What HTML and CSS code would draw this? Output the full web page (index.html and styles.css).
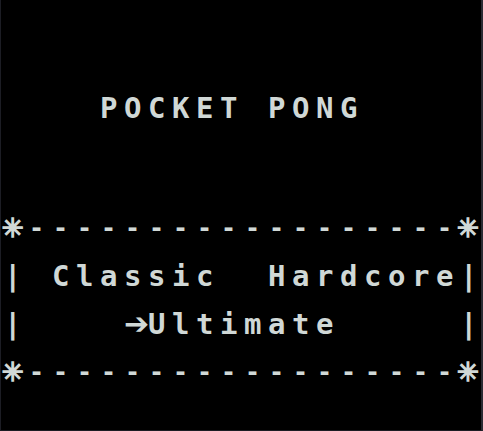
FILE: index.html
```html
<!DOCTYPE html>
<html>
<head>
<meta charset="utf-8">
<link rel="stylesheet" href="styles.css">
</head>
<body>
<div class="screen">
  <div class="line title">    POCKET PONG</div>
  <div class="box">
    <div class="line"><span class="star">✳</span><span class="dashes">-----------------<span class="last">-</span></span><span class="star end">✳</span></div>
    <div class="line">| Classic  Hardcore|</div>
    <div class="line">|    <span class="arrow">➔</span>Ultimate     |</div>
    <div class="line"><span class="star">✳</span><span class="dashes">-----------------<span class="last">-</span></span><span class="star end">✳</span></div>
  </div>
</div>
</body>
</html>
```
FILE: styles.css
```css
html, body {
  margin: 0;
  padding: 0;
  background: #000;
}
.screen {
  box-sizing: border-box;
  width: 483px;
  height: 431px;
  background: #000;
  border-left: 1px solid #1c1d24;
  border-right: 2px solid #2a2b33;
  border-bottom: 1px solid #1c1d24;
  padding: 84px 0 0 3px;
  color: #d0d8d6;
  font-family: "DejaVu Sans Mono", monospace;
  font-weight: bold;
  font-size: 29px;
  overflow: hidden;
}
.line {
  height: 48px;
  line-height: 48px;
  white-space: pre;
  letter-spacing: 6.54px;
}
.box {
  margin-top: 72px;
}
.dashes {
  display: inline-block;
  vertical-align: top;
  font-size: 25px;
  letter-spacing: 8.95px;
  padding-left: 4px;
}
.dashes .last {
  letter-spacing: 0;
  margin-right: 4px;
}
.star {
  display: inline-block;
  width: 24px;
  margin-left: -3px;
  letter-spacing: 0;
  text-align: center;
  font-family: "DejaVu Sans", sans-serif;
  font-weight: bold;
  font-size: 26px;
  -webkit-text-stroke: 1.5px #d0d8d6;
  vertical-align: top;
}
.star.end {
  margin-left: 0;
}
.arrow {
  display: inline-block;
  width: 24px;
  letter-spacing: 0;
  text-align: center;
  font-family: "DejaVu Sans", sans-serif;
  font-size: 30px;
  vertical-align: top;
}
```
